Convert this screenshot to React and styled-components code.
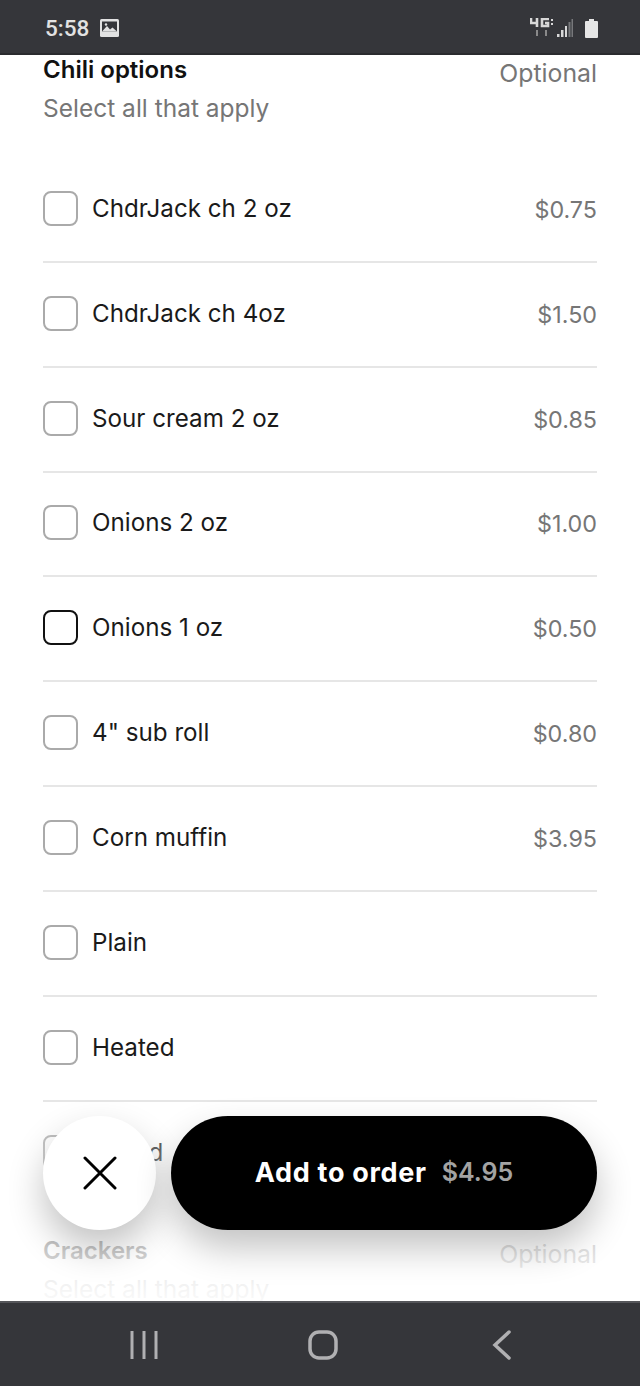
import React from 'react';
import styled, { createGlobalStyle } from 'styled-components';

const GlobalStyle = createGlobalStyle`
  html, body {
    margin: 0;
    padding: 0;
    background: #fff;
  }
  * {
    box-sizing: border-box;
  }
`;

const Screen = styled.div`
  width: 640px;
  height: 1386px;
  display: flex;
  flex-direction: column;
  overflow: hidden;
  font-family: "Inter", "Liberation Sans", sans-serif;
`;

const StatusBar = styled.div`
  height: 55px;
  flex: none;
  display: flex;
  align-items: center;
  justify-content: space-between;
  padding: 3px 42px 0 45px;
  background: #35363a;
  border-bottom: 2px solid #2a2b2e;
`;

const StatusGroup = styled.div`
  display: flex;
  align-items: center;
  gap: ${(p) => p.$gap || 0}px;
`;

const Clock = styled.span`
  font-family: "Roboto", sans-serif;
  font-size: 22.5px;
  font-weight: 500;
  color: #e2e2e2;
`;

const Content = styled.div`
  position: relative;
  flex: 1;
  overflow: hidden;
  background: #fff;
`;

const Section = styled.section`
  padding: 0 43px;
`;

const SectionHead = styled.div`
  display: flex;
  justify-content: space-between;
  align-items: flex-start;
`;

const SectionTitle = styled.h2`
  margin: 0;
  font-size: 24px;
  line-height: 30px;
  font-weight: 600;
  color: #111;
`;

const Optional = styled.span`
  font-size: 24.8px;
  line-height: 30px;
  margin-top: 3px;
  color: #767676;
`;

const Hint = styled.p`
  margin: 5px 0 0;
  font-size: 24.5px;
  line-height: 30px;
  color: #767676;
`;

const OptionList = styled.div`
  margin-top: 35px;
`;

const Row = styled.div`
  height: 104.85px;
  display: flex;
  align-items: center;
  gap: 14px;
  padding-bottom: 2px;
  border-bottom: 2px solid ${(p) => (p.$last ? 'transparent' : '#e6e6e6')};
`;

const Check = styled.span`
  width: 35px;
  height: 35px;
  flex: none;
  border-radius: 8px;
  background: #fff;
  border: 2px solid ${(p) => (p.$active ? '#111' : '#aaa')};
`;

const Label = styled.span`
  flex: 1;
  font-size: 24.2px;
  color: #1a1a1a;
`;

const Price = styled.span`
  margin-top: 2px;
  font-size: 23.3px;
  color: #767676;
`;

const CrackersSection = styled(Section)`
  margin-top: 30px;
`;

const Fade = styled.div`
  position: absolute;
  left: 0;
  right: 0;
  bottom: 0;
  height: 200px;
  pointer-events: none;
  background: linear-gradient(
    to bottom,
    rgba(255, 255, 255, 0) 0%,
    rgba(255, 255, 255, 0.35) 25%,
    rgba(255, 255, 255, 0.78) 75%,
    rgba(255, 255, 255, 0.93) 95%,
    rgba(255, 255, 255, 0.96) 100%
  );
`;

const ActionBar = styled.div`
  position: absolute;
  left: 43px;
  right: 43px;
  bottom: 71px;
  display: flex;
  gap: 15px;
`;

const CloseButton = styled.button`
  width: 113px;
  height: 114px;
  flex: none;
  display: flex;
  align-items: center;
  justify-content: center;
  padding: 0;
  border: 0;
  border-radius: 50%;
  background: #fff;
  box-shadow: 0 18px 36px rgba(0, 0, 0, 0.24);
`;

const AddButton = styled.button`
  flex: 1;
  height: 114px;
  display: flex;
  align-items: center;
  justify-content: center;
  gap: 15px;
  padding: 0 0 2px;
  border: 0;
  border-radius: 57px;
  background: #000;
  font-family: inherit;
  font-size: 27px;
  font-weight: 700;
  letter-spacing: 0.7px;
  color: #fff;
  box-shadow: 0 18px 36px rgba(0, 0, 0, 0.24);
`;

const AddPrice = styled.span`
  font-size: 25px;
  font-weight: 600;
  letter-spacing: 0;
  color: #a3a3a3;
`;

const NavBar = styled.div`
  height: 85px;
  flex: none;
  display: flex;
  align-items: center;
  justify-content: space-between;
  padding: 0 128px 0 129px;
  background: #35363a;
  border-top: 2px solid #55565a;
`;

const ImageIcon = () => (
  <svg width="19" height="18" viewBox="0 0 19 18">
    <rect width="19" height="18" rx="1.5" fill="#e2e2e2" />
    <rect x="2" y="2.5" width="15" height="10" fill="#35363a" />
    <path d="M2 12.5 7 7l3 3.5 2.5-2L17 12.5z" fill="#e2e2e2" />
    <circle cx="6" cy="5.5" r="1.2" fill="#e2e2e2" />
  </svg>
);

const NetworkIcon = () => (
  <svg width="43" height="20" viewBox="0 0 43 20">
    <path d="M1 0v5h6M7 0v9" fill="none" stroke="#d8d8d8" strokeWidth="2.6" />
    <path d="M19 1h-7v7h6V5h-3" fill="none" stroke="#d8d8d8" strokeWidth="2.6" />
    <path d="M21 2h2M21 6h2" stroke="#d8d8d8" strokeWidth="1.8" />
    <path d="M7 12v6M16 12v6" stroke="#8a8a8a" strokeWidth="2" />
    <path d="M27 16h2.5v3H27zM31 12h2.5v7H31zM35 8h2v11h-2z" fill="#d8d8d8" />
    <path d="M38.5 4h2v15h-2zM41.5 1H43v18h-1.5z" fill="#77787b" />
  </svg>
);

const BatteryIcon = () => (
  <svg width="13" height="19" viewBox="0 0 13 19">
    <path d="M4 0h5v2h3a1 1 0 0 1 1 1v15a1 1 0 0 1-1 1H1a1 1 0 0 1-1-1V3a1 1 0 0 1 1-1h3z" fill="#e6e6e6" />
  </svg>
);

const CloseIcon = () => (
  <svg width="34" height="34" viewBox="0 0 34 34">
    <path d="M2 2l30 30M32 2 2 32" stroke="#000" strokeWidth="3" strokeLinecap="round" />
  </svg>
);

const RecentsIcon = () => (
  <svg width="30" height="30" viewBox="0 0 30 30">
    <path d="M3 1v28M15 1v28M27 1v28" stroke="#b0b0b2" strokeWidth="3" />
  </svg>
);

const HomeIcon = () => (
  <svg width="30" height="30" viewBox="0 0 30 30">
    <rect x="2" y="2" width="26" height="26" rx="9" fill="none" stroke="#b0b0b2" strokeWidth="3.5" />
  </svg>
);

const BackIcon = () => (
  <svg width="25" height="30" viewBox="0 0 25 30">
    <path d="M22 2 8 15l14 13" fill="none" stroke="#b0b0b2" strokeWidth="3.5" strokeLinecap="round" />
  </svg>
);

const options = [
  { name: 'ChdrJack ch 2 oz', price: '$0.75' },
  { name: 'ChdrJack ch 4oz', price: '$1.50' },
  { name: 'Sour cream 2 oz', price: '$0.85' },
  { name: 'Onions 2 oz', price: '$1.00' },
  { name: 'Onions 1 oz', price: '$0.50', active: true },
  { name: '4" sub roll', price: '$0.80' },
  { name: 'Corn muffin', price: '$3.95' },
  { name: 'Plain' },
  { name: 'Heated' },
  { name: 'Boxed' },
];

const App = () => {
  return (
    <Screen>
      <GlobalStyle />
      <StatusBar>
        <StatusGroup $gap={11}>
          <Clock>5:58</Clock>
          <ImageIcon />
        </StatusGroup>
        <StatusGroup $gap={12}>
          <NetworkIcon />
          <BatteryIcon />
        </StatusGroup>
      </StatusBar>
      <Content>
        <Section>
          <SectionHead>
            <SectionTitle>Chili options</SectionTitle>
            <Optional>Optional</Optional>
          </SectionHead>
          <Hint>Select all that apply</Hint>
          <OptionList>
            {options.map((item, i) => (
              <Row key={item.name} $last={i === options.length - 1}>
                <Check $active={item.active} />
                <Label>{item.name}</Label>
                {item.price && <Price>{item.price}</Price>}
              </Row>
            ))}
          </OptionList>
        </Section>
        <CrackersSection>
          <SectionHead>
            <SectionTitle>Crackers</SectionTitle>
            <Optional>Optional</Optional>
          </SectionHead>
          <Hint>Select all that apply</Hint>
        </CrackersSection>
        <Fade />
        <ActionBar>
          <CloseButton aria-label="Close">
            <CloseIcon />
          </CloseButton>
          <AddButton>
            Add to order
            <AddPrice>$4.95</AddPrice>
          </AddButton>
        </ActionBar>
      </Content>
      <NavBar>
        <RecentsIcon />
        <HomeIcon />
        <BackIcon />
      </NavBar>
    </Screen>
  );
};

export default App;
